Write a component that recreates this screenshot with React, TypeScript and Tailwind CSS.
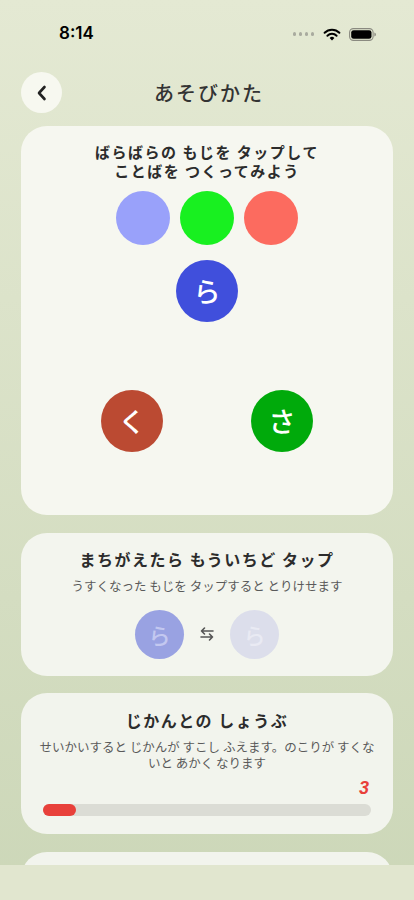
import React from "react";

const jp = { fontFamily: '"Noto Sans CJK JP", "Noto Sans", sans-serif' };

function Wifi() {
  return (
    <svg width="18" height="13" viewBox="0 0 18 13">
      <path d="M9 12.5 L6.6 9.9 A3.4 3.4 0 0 1 11.4 9.9 Z" fill="#000" />
      <path d="M4.4 7.7 A6.5 6.5 0 0 1 13.6 7.7" stroke="#000" strokeWidth="2" fill="none" strokeLinecap="round" />
      <path d="M1.6 4.8 A10.5 10.5 0 0 1 16.4 4.8" stroke="#000" strokeWidth="2" fill="none" strokeLinecap="round" />
    </svg>
  );
}

function Battery() {
  return (
    <svg width="27" height="13" viewBox="0 0 27 13">
      <rect x="0.6" y="0.6" width="23.5" height="11.8" rx="3.8" fill="none" stroke="#8a8a80" strokeWidth="1.1" />
      <rect x="2.2" y="2.2" width="20.3" height="8.6" rx="2.4" fill="#000" />
      <path d="M25.4 4.4 A2.2 2.2 0 0 1 25.4 8.6 Z" fill="#8a8a80" />
    </svg>
  );
}

function Swap() {
  return (
    <svg width="16" height="16" viewBox="0 0 16 16" fill="none" stroke="#555" strokeWidth="1.6" strokeLinecap="round" strokeLinejoin="round">
      <path d="M14 5 H2.5 M5.5 2 L2.5 5 L5.5 8" />
      <path d="M2 11 H13.5 M10.5 8 L13.5 11 L10.5 14" />
    </svg>
  );
}

export default function App() {
  return (
    <div className="relative w-[414px] h-[900px] overflow-hidden bg-gradient-to-b from-[#e4e9d3] to-[#ccd7b8]" style={jp}>
      {/* status bar */}
      <div className="h-[72px] flex items-start pt-[24px] px-[59px] pr-[38px] justify-between">
        <div className="h-[20px] flex items-center text-[17px] font-semibold text-black" style={{ fontFamily: 'Inter, "Liberation Sans", sans-serif' }}>
          8:14
        </div>
        <div className="h-[20px] flex items-center gap-[8px]">
          <div className="flex gap-[2.5px] mr-[1px]">
            <span className="w-[3.5px] h-[3.5px] rounded-full bg-[#a9ab9f]" />
            <span className="w-[3.5px] h-[3.5px] rounded-full bg-[#a9ab9f]" />
            <span className="w-[3.5px] h-[3.5px] rounded-full bg-[#a9ab9f]" />
            <span className="w-[3.5px] h-[3.5px] rounded-full bg-[#a9ab9f]" />
          </div>
          <Wifi />
          <Battery />
        </div>
      </div>

      {/* header */}
      <div className="relative h-[41px] px-[21px] flex items-center">
        <button className="w-[41px] h-[41px] rounded-full bg-[#f7f8f0] flex items-center justify-center">
          <svg width="12" height="16" viewBox="0 0 12 16" fill="none" stroke="#222" strokeWidth="2.6" strokeLinecap="round" strokeLinejoin="round">
            <path d="M8.5 2 L3 8 L8.5 14" />
          </svg>
        </button>
        <div className="absolute inset-0 flex items-center justify-center pointer-events-none">
          <span className="text-[20px] font-medium tracking-[2px] text-[#333] pl-[4px]">あそびかた</span>
        </div>
      </div>

      {/* cards */}
      <div className="mt-[13px] px-[21px] flex flex-col gap-[17.5px]">
        {/* card 1 */}
        <div className="h-[389px] rounded-[26px] bg-[#f6f7f0] pt-[16px] flex flex-col items-center">
          <div className="text-center text-[15px] leading-[19px] font-bold tracking-[1.5px] text-[#2c2c2c]">
            <div>ばらばらの もじを タップして</div>
            <div>ことばを つくってみよう</div>
          </div>
          <div className="mt-[11px] flex gap-[10px]">
            <div className="w-[54px] h-[54px] rounded-full bg-[#99a1fa]" />
            <div className="w-[54px] h-[54px] rounded-full bg-[#18f020]" />
            <div className="w-[54px] h-[54px] rounded-full bg-[#fc6b5f]" />
          </div>
          <div className="mt-[15px] w-[62px] h-[62px] rounded-full bg-[#404fdc] flex items-center justify-center text-white text-[27px] font-medium">
            ら
          </div>
          <div className="mt-[68px] w-full px-[80px] flex justify-between">
            <div className="w-[62px] h-[62px] rounded-full bg-[#bb4a32] flex items-center justify-center text-white text-[27px] font-medium">
              く
            </div>
            <div className="w-[62px] h-[62px] rounded-full bg-[#00aa0b] flex items-center justify-center text-white text-[27px] font-medium">
              さ
            </div>
          </div>
        </div>

        {/* card 2 */}
        <div className="h-[143px] rounded-[26px] bg-[#f3f5ee] pt-[16px] flex flex-col items-center">
          <div className="text-[16px] leading-[20px] font-bold tracking-[1.5px] text-[#2c2c2c]">
            まちがえたら もういちど タップ
          </div>
          <div className="mt-[8px] text-[12.5px] leading-[18px] text-[#5a5a5a]">
            うすくなった もじを タップすると とりけせます
          </div>
          <div className="mt-[15px] flex items-center gap-[15px]">
            <div className="w-[49px] h-[49px] rounded-full bg-[#99a2e2] flex items-center justify-center text-[#c3c8f0] text-[22px] font-medium">
              ら
            </div>
            <Swap />
            <div className="w-[49px] h-[49px] rounded-full bg-[#dcdeeb] flex items-center justify-center text-[#e9eaf3] text-[22px] font-medium">
              ら
            </div>
          </div>
        </div>

        {/* card 3 */}
        <div className="h-[141px] rounded-[26px] bg-[#f2f4ed] pt-[17px] px-[16px] flex flex-col items-center">
          <div className="text-[16px] leading-[20px] font-bold tracking-[1.5px] text-[#2c2c2c]">
            じかんとの しょうぶ
          </div>
          <div className="mt-[9px] text-center text-[12.5px] leading-[16px] text-[#5a5a5a]">
            せいかいすると じかんが すこし ふえます。のこりが すくないと あかく なります
          </div>
          <div className="w-full px-[6px] mt-[9px] flex justify-end">
            <span className="text-[18px] leading-[16px] font-bold italic text-[#e8403a] pr-[2px]" style={{ fontFamily: '"Liberation Sans", sans-serif' }}>
              3
            </span>
          </div>
          <div className="w-full px-[6px] mt-[8px]">
            <div className="h-[12px] w-full rounded-full bg-[#dbdcd5]">
              <div className="h-[12px] w-[33px] rounded-full bg-[#e8403a]" />
            </div>
          </div>
        </div>

        {/* card 4 */}
        <div className="h-[140px] rounded-[26px] bg-[#f2f4ed]" />
      </div>

      {/* bottom bar */}
      <div className="absolute left-0 right-0 bottom-0 h-[35px] bg-[#e1e6cf]" />
    </div>
  );
}
